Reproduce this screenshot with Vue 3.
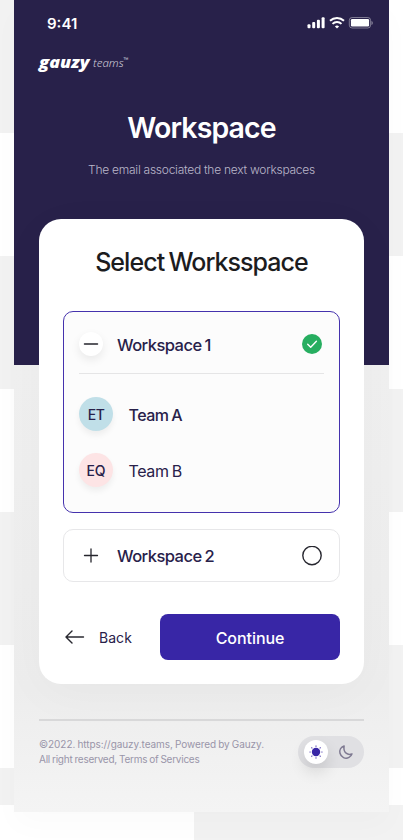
<script setup>
import { ref } from 'vue'

const expanded = ref('Workspace 1')
const teams = [
  { initials: 'ET', name: 'Team A', tone: 'blue' },
  { initials: 'EQ', name: 'Team B', tone: 'pink' },
]
</script>

<template>
  <div class="stage">
    <main class="phone">
      <header class="hero">
        <div class="status">
          <span class="time">9:41</span>
          <svg class="indicators" width="67" height="12" viewBox="0 0 67 12">
            <g fill="#fff">
              <rect x="0.5" y="7.2" width="3" height="4" rx="1" />
              <rect x="5.2" y="5" width="3" height="6.2" rx="1" />
              <rect x="9.9" y="2.7" width="3" height="8.5" rx="1" />
              <rect x="14.6" y="0.3" width="3" height="10.9" rx="1" />
              <path d="M27.9 9.4Q30 7.6 32.1 9.4L30 11.5Z" />
              <rect x="43.9" y="2" width="18.2" height="7.5" rx="1.3" />
              <path d="M64.5 4v4c.8-.3 1.3-1.1 1.3-2s-.5-1.7-1.3-2Z" opacity=".45" />
            </g>
            <g fill="none" stroke="#fff" stroke-width="2">
              <path d="M23 3.8c4-3.7 10-3.7 14 0" />
              <path d="M25.5 6.9c2.5-2.4 6.5-2.4 9 0" />
              <rect x="42.3" y=".5" width="21.3" height="10.5" rx="2.8" stroke-width="1" opacity=".4" />
            </g>
          </svg>
        </div>
        <div class="brand"><b>gauzy</b><i>teams</i><sup>™</sup></div>
        <h1>Workspace</h1>
        <p>The email associated the next workspaces</p>
      </header>

      <section class="card">
        <h2>Select Worksspace</h2>

        <div class="workspace" :class="{ open: expanded === 'Workspace 1' }">
          <div class="row first">
            <span class="toggle raised">
              <svg width="24" height="24" viewBox="0 0 24 24"><path d="M5.5 12h13" stroke="#25252d" stroke-width="1.5" stroke-linecap="round" /></svg>
            </span>
            <span class="name">Workspace 1</span>
            <svg class="mark" width="20" height="20" viewBox="0 0 20 20">
              <circle cx="10" cy="10" r="10" fill="#27ae60" />
              <path d="M5.7 10.2l3 3 5.7-5.9" fill="none" stroke="#fff" stroke-width="1.4" stroke-linecap="round" stroke-linejoin="round" />
            </svg>
          </div>
          <ul class="teams">
            <li v-for="team in teams" :key="team.name" :class="team.tone">
              <span class="avatar">{{ team.initials }}</span>
              <span class="team">{{ team.name }}</span>
            </li>
          </ul>
        </div>

        <div class="workspace">
          <div class="row second">
            <span class="toggle">
              <svg width="24" height="24" viewBox="0 0 24 24"><path d="M5.5 11.5h13M12 5v13" stroke="#25252d" stroke-width="1.3" stroke-linecap="round" /></svg>
            </span>
            <span class="name">Workspace 2</span>
            <svg class="mark" width="20" height="20" viewBox="0 0 20 20"><circle cx="10" cy="9.5" r="9.2" fill="none" stroke="#282830" stroke-width="1.4" /></svg>
          </div>
        </div>

        <div class="actions">
          <button class="back">
            <svg width="20" height="14" viewBox="0 0 20 14"><path d="M18.5 7H1.2M7 .9L1 7l6 6.1" fill="none" stroke="#282830" stroke-width="1.4" stroke-linecap="round" stroke-linejoin="round" /></svg>
            <span>Back</span>
          </button>
          <button class="continue"><span>Continue</span></button>
        </div>
      </section>

      <footer>
        <div class="legal">
          <div class="source">©2022. https://gauzy.teams, Powered by Gauzy.</div>
          <div class="terms">All right reserved, Terms of Services</div>
        </div>
        <div class="theme">
          <span class="sun">
            <svg width="16" height="16" viewBox="0 0 16 16">
              <circle cx="8" cy="8" r="4.2" fill="#3826a6" />
              <path d="M8 1.8v.6M8 13.6v.6M1.8 8h.6M13.6 8h.6M3.6 3.6l.4.4M12 12l.4.4M3.6 12.4l.4-.4M12 4l.4-.4" stroke="#3826a6" stroke-width="1.2" stroke-linecap="round" opacity=".65" />
            </svg>
          </span>
          <svg class="moon" width="16" height="16" viewBox="0 0 16 16"><path d="M6.1 2C2.8 3.1 1.2 6.3 2 9.3c1 4 5.4 6 9 4.1 1.500-.8 2.500-1.900 3-3.500-1.800.7-4.100.7-5.900-.7C6 7.500 5.600 4.700 6.100 2Z" fill="none" stroke="#7e7991" stroke-width="1.5" stroke-linejoin="round" /></svg>
        </div>
      </footer>
    </main>
  </div>
</template>

<style>
body { margin: 0; }
</style>

<style scoped>
* { box-sizing: border-box; }
.stage {
  width: 403px;
  height: 840px;
  overflow: hidden;
  padding: 0 14px;
  font-family: Inter, "Liberation Sans", sans-serif;
  background:
    linear-gradient(#f2f2f2 133px, #fff 133px 256px, #f2f2f2 256px 389px, #fff 389px 512px, #f2f2f2 512px 645px, #fff 645px 768px, #f2f2f2 768px 805px, #fff 805px) 0 0 / 194px 840px no-repeat,
    linear-gradient(#fff 133px, #f2f2f2 133px 256px, #fff 256px 389px, #f2f2f2 389px 512px, #fff 512px 645px, #f2f2f2 645px 768px, #fff 768px 805px, #f2f2f2 805px) 194px 0 / 209px 840px no-repeat;
}
.phone {
  width: 375px;
  height: 812px;
  background: linear-gradient(180deg, #f0f0f0 365px, #ededed 690px, #f4f4f4 812px);
  box-shadow: 0 14px 28px rgba(0, 0, 0, .02);
}
.hero {
  height: 365px;
  background: #28214a;
  color: #fff;
  text-align: center;
}
.status {
  height: 45px;
  padding: 0 15px 0 33px;
  display: flex;
  align-items: center;
  justify-content: space-between;
}
.time { padding-top: 1px; font-size: 15px; font-weight: 600; letter-spacing: 0; }
.indicators { display: block; }
.brand {
  height: 32px;
  padding: 1px 0 0 25px;
  display: flex;
  align-items: center;
  font-family: "Open Sans", sans-serif;
  font-style: italic;
  line-height: 20px;
}
.brand b {
  width: 51px;
  text-align: left;
  font-size: 15.5px;
  font-weight: 800;
  transform: scaleX(1.15);
  transform-origin: left;
}
.brand i {
  margin: 2px 0 0 3px;
  font-family: "Noto Sans", sans-serif;
  font-size: 11.5px;
  font-weight: 300;
  letter-spacing: 0;
  color: #d0cedb;
}
.brand sup { font-size: 6.5px; font-style: normal; line-height: 6px; margin-bottom: 4px; color: #d0cedb; }
h1 {
  margin: 33px 0 0;
  height: 36px;
  font-size: 28.5px;
  line-height: 36px;
  font-weight: 600;
  letter-spacing: -.9px;
}
.hero p {
  margin: 14px 0 0;
  font-size: 12px;
  line-height: 20px;
  font-weight: 300;
  letter-spacing: -.25px;
  color: #bab7c9;
}
.card {
  height: 465px;
  margin: -146px 25px 0;
  padding: 25px 24px 0;
  border-radius: 22px;
  background: #fff;
  box-shadow: 0 10px 50px rgba(0, 0, 0, .03);
}
h2 {
  margin: 0 0 31px;
  height: 36px;
  font-size: 25px;
  line-height: 36px;
  font-weight: 500;
  letter-spacing: -.95px;
  word-spacing: -1.5px;
  text-align: center;
  color: #1c1c1e;
}
.workspace {
  border: 1px solid #e7e7e9;
  border-radius: 10px;
}
.workspace.open {
  height: 202px;
  margin-bottom: 16px;
  padding: 0 15px;
  background: #fcfcfc;
  border-color: #4532ad;
}
.row { display: flex; align-items: center; color: #28214a; }
.first { height: 62px; padding: 3px 2px 0 0; border-bottom: 1px solid #e5e5e6; }
.second { height: 51px; padding: 0 17px 0 15px; }
.toggle { width: 24px; height: 24px; border-radius: 50%; }
.toggle svg { display: block; }
.raised { background: #fff; box-shadow: 0 4px 10px rgba(0, 0, 0, .08); }
.name {
  flex: 1;
  margin-left: 14px;
  padding-top: 1px;
  font-size: 16.5px;
  line-height: 22px;
  font-weight: 500;
  letter-spacing: -.53px;
  word-spacing: -1px;
}
.teams {
  list-style: none;
  margin: 23px 0 0;
  padding: 0;
  display: grid;
  gap: 22px;
}
.teams li { display: flex; align-items: center; height: 34px; color: #28214a; }
.avatar {
  width: 34px;
  height: 34px;
  border-radius: 50%;
  line-height: 35px;
  text-align: center;
  font-size: 14px;
  font-weight: 500;
  letter-spacing: -.6px;
  background: #c0dfe8;
  box-shadow: 0 4px 6px rgba(0, 0, 0, .06);
}
.pink .avatar { background: #fde4e5; letter-spacing: -.1px; }
.team { margin-left: 15.5px; padding-top: 2px; font-size: 16px; font-weight: 500; letter-spacing: -.5px; word-spacing: -1px; }
.pink .team { font-weight: 400; letter-spacing: -.35px; }
.actions { display: flex; margin-top: 32px; height: 46px; }
button { border: 0; padding: 0; font-family: inherit; }
.back {
  width: 97px;
  padding-left: 2px;
  background: none;
  display: flex;
  align-items: center;
  gap: 14px;
  color: #28214a;
  font-size: 14px;
  letter-spacing: .05px;
}
.continue {
  width: 180px;
  padding-top: 1px;
  border-radius: 8px;
  background: #3826a6;
  color: #fff;
  font-size: 16px;
  font-weight: 500;
  letter-spacing: -.05px;
}
footer {
  margin: 35px 25px 0;
  padding-top: 15px;
  border-top: 2px solid #d8d8d9;
  display: flex;
  justify-content: space-between;
}
.legal { padding-top: 1px; font-size: 10px; line-height: 15px; color: #9995a9; white-space: nowrap; }
.source { letter-spacing: -.06px; word-spacing: -.6px; }
.terms { letter-spacing: -.24px; word-spacing: -.6px; }
.theme {
  width: 66px;
  height: 32px;
  padding: 0 10px 0 6px;
  border-radius: 16px;
  background: #e0e0e3;
  display: flex;
  align-items: center;
  justify-content: space-between;
}
.sun {
  width: 24px;
  height: 24px;
  border-radius: 50%;
  background: #fff;
  display: grid;
  place-items: center;
  box-shadow: 0 8px 16px rgba(0, 0, 0, .12);
}
</style>
